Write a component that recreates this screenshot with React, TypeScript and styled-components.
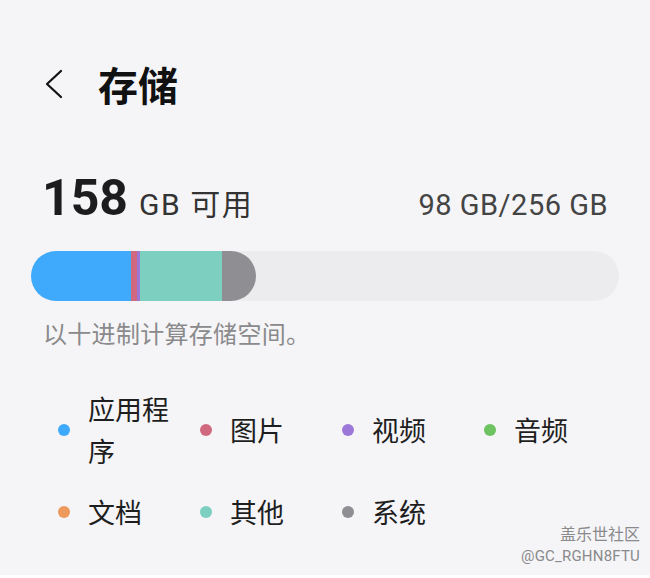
import styled, { createGlobalStyle } from "styled-components";

const GlobalStyle = createGlobalStyle`
  html, body {
    margin: 0;
    padding: 0;
    background: #f5f5f7;
  }
  body {
    font-family: Roboto, "Noto Sans CJK SC", sans-serif;
    color: #1c1c1e;
  }
`;

const Page = styled.div`
  position: relative;
  width: 650px;
  height: 578px;
  box-sizing: border-box;
  padding: 0 31px;
  background: #f5f5f7;
  overflow: hidden;
  border-bottom: 3px solid #fdfdfd;
`;

const Header = styled.div`
  display: flex;
  align-items: center;
  height: 50px;
  margin-top: 59px;
  padding-left: 13px;
  gap: 34px;
`;

const Title = styled.h1`
  margin: 0;
  font-size: 40px;
  font-weight: 700;
  font-family: "Noto Sans CJK SC", sans-serif;
  color: #111;
`;

const Summary = styled.div`
  display: flex;
  align-items: baseline;
  justify-content: space-between;
  margin-top: 60px;
  padding: 0 11px 0 11px;
  height: 50px;
`;

const Available = styled.div`
  display: flex;
  align-items: baseline;
  gap: 11px;
`;

const Big = styled.span`
  font-size: 50px;
  font-weight: 700;
  color: #1c1c1e;
`;

const Unit = styled.span`
  font-size: 30px;
  letter-spacing: 1.5px;
  color: #333;
`;

const Total = styled.span`
  font-size: 29px;
  letter-spacing: 0.5px;
  color: #444;
`;

const Bar = styled.div`
  display: flex;
  height: 50px;
  margin-top: 32px;
  border-radius: 25px;
  background: #ececee;
  overflow: hidden;
`;

const Used = styled.div`
  display: flex;
  height: 100%;
  border-radius: 0 25px 25px 0;
  overflow: hidden;
`;

const Segment = styled.div<{ $color: string; $w: number }>`
  width: ${(p) => p.$w}px;
  background: ${(p) => p.$color};
`;

const Note = styled.p`
  margin: 14px 0 0 12px;
  font-size: 24px;
  letter-spacing: 0.3px;
  color: #8a8a8c;
  font-family: "Noto Sans CJK SC", sans-serif;
`;

const Legend = styled.div`
  display: grid;
  grid-template-columns: repeat(4, 142px);
  row-gap: 19px;
  margin: 38px 0 0 27px;
`;

const Item = styled.div`
  display: flex;
  align-items: center;
  gap: 18px;
`;

const Dot = styled.span<{ $color: string }>`
  width: 12px;
  height: 12px;
  border-radius: 50%;
  flex: none;
  background: ${(p) => p.$color};
`;

const Label = styled.span`
  max-width: 95px;
  font-size: 27px;
  line-height: 42px;
  color: #1e1e1e;
  font-family: "Noto Sans CJK SC", sans-serif;
`;

const Watermark = styled.div`
  position: absolute;
  right: 10px;
  bottom: 7px;
  text-align: right;
  color: #8a8a8c;
  line-height: 23px;
`;

const WmTitle = styled.div`
  font-size: 16px;
  font-family: "Noto Sans CJK SC", sans-serif;
`;

const WmUser = styled.div`
  font-size: 15px;
  letter-spacing: 0.2px;
`;

const segments = [
  { color: "#3fa9fb", w: 100 },
  { color: "#d0697f", w: 6 },
  { color: "#9b78d8", w: 3 },
  { color: "#7dcfc0", w: 82 },
  { color: "#8e8e93", w: 34 },
];

const legend = [
  { label: "应用程序", color: "#3fa9fb" },
  { label: "图片", color: "#d0697f" },
  { label: "视频", color: "#9b78d8" },
  { label: "音频", color: "#6cc35f" },
  { label: "文档", color: "#ee9a5e" },
  { label: "其他", color: "#7dcfc0" },
  { label: "系统", color: "#8e8e93" },
];

function App() {
  return (
    <>
      <GlobalStyle />
      <Page>
        <Header>
          <svg width="20" height="30" viewBox="0 0 20 30" fill="none">
            <path d="M17 2 L3 15 L17 28" stroke="#111" strokeWidth="2.2" strokeLinecap="round" strokeLinejoin="round" />
          </svg>
          <Title>存储</Title>
        </Header>
        <Summary>
          <Available>
            <Big>158</Big>
            <Unit>GB 可用</Unit>
          </Available>
          <Total>98 GB/256 GB</Total>
        </Summary>
        <Bar>
          <Used>
            {segments.map((s, i) => (
              <Segment key={i} $color={s.color} $w={s.w} />
            ))}
          </Used>
        </Bar>
        <Note>以十进制计算存储空间。</Note>
        <Legend>
          {legend.map((l) => (
            <Item key={l.label}>
              <Dot $color={l.color} />
              <Label>{l.label}</Label>
            </Item>
          ))}
        </Legend>
        <Watermark>
          <WmTitle>盖乐世社区</WmTitle>
          <WmUser>@GC_RGHN8FTU</WmUser>
        </Watermark>
      </Page>
    </>
  );
}

export default App;
